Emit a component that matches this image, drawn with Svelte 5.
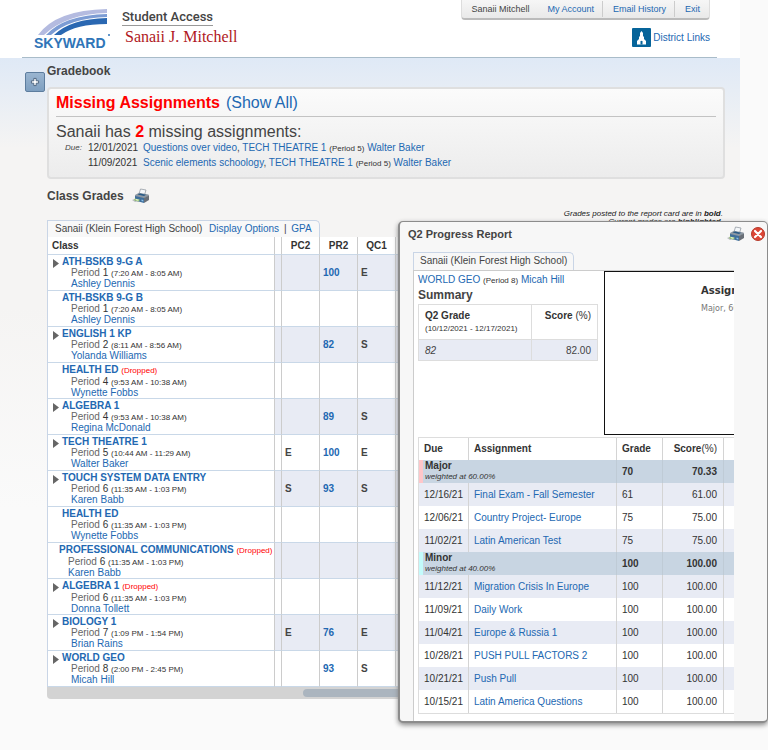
<script lang="ts">
	type Course = {
		name: string;
		period: number;
		time: string;
		teacher: string;
		open?: boolean;
		dropped?: boolean;
		wide?: boolean;
		grades: string[];
	};

	const missing = [
		{ date: '12/01/2021', title: 'Questions over video' },
		{ date: '11/09/2021', title: 'Scenic elements schoology' }
	];

	// grades: PC2, PR2, QC1, Q2
	const courses: Course[] = [
		{ name: 'ATH-BSKB 9-G A', period: 1, time: '7:20 AM - 8:05 AM', teacher: 'Ashley Dennis', open: true, grades: ['', '100', 'E', '100'] },
		{ name: 'ATH-BSKB 9-G B', period: 1, time: '7:20 AM - 8:05 AM', teacher: 'Ashley Dennis', grades: ['', '', '', ''] },
		{ name: 'ENGLISH 1 KP', period: 2, time: '8:11 AM - 8:56 AM', teacher: 'Yolanda Williams', open: true, grades: ['', '82', 'S', '82'] },
		{ name: 'HEALTH ED', period: 4, time: '9:53 AM - 10:38 AM', teacher: 'Wynette Fobbs', dropped: true, grades: ['', '', '', ''] },
		{ name: 'ALGEBRA 1', period: 4, time: '9:53 AM - 10:38 AM', teacher: 'Regina McDonald', open: true, grades: ['', '89', 'S', '89'] },
		{ name: 'TECH THEATRE 1', period: 5, time: '10:44 AM - 11:29 AM', teacher: 'Walter Baker', open: true, grades: ['E', '100', 'E', '100'] },
		{ name: 'TOUCH SYSTEM DATA ENTRY', period: 6, time: '11:35 AM - 1:03 PM', teacher: 'Karen Babb', open: true, grades: ['S', '93', 'S', '93'] },
		{ name: 'HEALTH ED', period: 6, time: '11:35 AM - 1:03 PM', teacher: 'Wynette Fobbs', grades: ['', '', '', ''] },
		{ name: 'PROFESSIONAL COMMUNICATIONS', period: 6, time: '11:35 AM - 1:03 PM', teacher: 'Karen Babb', dropped: true, wide: true, grades: ['', '', '', ''] },
		{ name: 'ALGEBRA 1', period: 6, time: '11:35 AM - 1:03 PM', teacher: 'Donna Tollett', open: true, dropped: true, grades: ['', '', '', ''] },
		{ name: 'BIOLOGY 1', period: 7, time: '1:09 PM - 1:54 PM', teacher: 'Brian Rains', open: true, grades: ['E', '76', 'E', '76'] },
		{ name: 'WORLD GEO', period: 8, time: '2:00 PM - 2:45 PM', teacher: 'Micah Hill', open: true, grades: ['', '93', 'S', '93'] }
	];

	const categories = [
		{
			name: 'Major', weight: '60.00%', grade: '70', score: '70.33', mark: 'pink',
			items: [
				['12/16/21', 'Final Exam - Fall Semester', '61', '61.00'],
				['12/06/21', 'Country Project- Europe', '75', '75.00'],
				['11/02/21', 'Latin American Test', '75', '75.00']
			]
		},
		{
			name: 'Minor', weight: '40.00%', grade: '100', score: '100.00', mark: 'cyan',
			items: [
				['11/12/21', 'Migration Crisis In Europe', '100', '100.00'],
				['11/09/21', 'Daily Work', '100', '100.00'],
				['11/04/21', 'Europe & Russia 1', '100', '100.00'],
				['10/28/21', 'PUSH PULL FACTORS 2', '100', '100.00'],
				['10/21/21', 'Push Pull', '100', '100.00'],
				['10/15/21', 'Latin America Questions', '100', '100.00']
			]
		}
	];
</script>

{#snippet printer()}
	<svg class="printer" viewBox="0 0 18 16" aria-hidden="true">
		<path d="M0 12 L5 10 L8 13 L3 14Z" fill="#b9bdc0" />
		<path d="M7 6 L8.5 1 L14 2 L12.5 7Z" fill="#f4f7fa" stroke="#8a9199" stroke-width=".7" />
		<path d="M3 7 L7 4.8 L16.5 6.5 L17 8 L12 10.5 L3 9Z" fill="#8d98a3" />
		<path d="M3 8 L12 10 L12 15 L3 12.5Z" fill="#3f6f9c" />
		<path d="M12 10 L17 7.5 L17 12 L12 15Z" fill="#696f77" />
		<path d="M5.5 6.5 L8 5.5 L14 6.7 L12 8Z" fill="#285a87" />
		<path d="M3 10.5 L8 11.7 L6.5 13.5 L2 12.3Z" fill="#9cc66b" />
		<path d="M4 11 L7 11.7 L6 12.7 L3.5 12Z" fill="#e8f2da" />
		<path d="M9.5 11.5 L11.3 12 V13.5 L9.5 13Z" fill="#8fc1e8" />
	</svg>
{/snippet}

<div class="page">
	<header class="top">
		<svg class="logo" viewBox="0 0 78 42" role="img" aria-label="Skyward">
			<path d="M4 26 Q22 1 73 0 V4 Q32 5 10 26Z" fill="#b4bbe0" />
			<path d="M12 26 Q30 6 73 5 V8 Q36 9 17 26Z" fill="#7c9cd4" />
			<path d="M20 26 Q36 10 73 9 V15 Q42 15 27 26Z" fill="#2a68b2" />
			<text class="logo-text" x="0" y="39">SKYWARD</text>
			<circle cx="75" cy="26" r="1" fill="#2f75b8" />
		</svg>

		<div class="student">
			<div class="access">Student Access</div>
			<div class="student-name">Sanaii J. Mitchell</div>
		</div>

		<div class="top-right">
			<nav class="account">
				<span>Sanaii Mitchell</span>
				<a href="#account">My Account</a>
				<a href="#email" class="divided">Email History</a>
				<a href="#exit" class="divided">Exit</a>
			</nav>
			<a class="district" href="#district">
				<svg viewBox="0 0 19 19" aria-hidden="true">
					<rect width="19" height="19" rx="1" fill="#06649a" />
					<path d="M9.5 3 L11 5 V8 L12 9 V11 L14 13 V16.5 H5 V13 L7 11 V9 L8 8 V5Z" fill="#fff" />
					<path d="M8.5 16.5 V13.5 Q9.5 12 10.5 13.5 V16.5Z" fill="#06649a" />
				</svg>
				District Links
			</a>
		</div>
	</header>

	<main>
		<button class="plus" aria-label="Expand menu">
			<svg viewBox="0 0 10 10" aria-hidden="true">
				<path d="M4 2 H6 V4 H8 V6 H6 V8 H4 V6 H2 V4 H4Z" fill="#fff" stroke="#4d6580" stroke-width=".8" />
			</svg>
		</button>

		<div class="content">
			<h1>Gradebook</h1>

			<section class="missing">
				<h2>
					<b>Missing Assignments</b>
					<a href="#all">(Show All)</a>
				</h2>
				<p class="count">Sanaii has <b>2</b> missing assignments:</p>
				{#each missing as m, i (m.date)}
					<div class="due">
						<em>{i === 0 ? 'Due:' : ''}</em>
						<span class="date">{m.date}</span>
						<span>
							<a href="#assignment">{m.title}</a>,
							<a href="#course">TECH THEATRE 1</a>
							<small>(Period 5)</small>
							<a href="#teacher">Walter Baker</a>
						</span>
					</div>
				{/each}
			</section>

			<div class="grades-head">
				<h1>Class Grades</h1>
				<button class="icon-btn" aria-label="Print">{@render printer()}</button>
			</div>

			<p class="note">
				Grades posted to the report card are in <b>bold</b>.<br />
				Current grades are <b>highlighted</b>.
			</p>

			<div class="tab">
				Sanaii (Klein Forest High School)
				<a href="#display">Display Options</a>
				<span>|</span>
				<a href="#gpa">GPA</a>
			</div>

			<table class="grades">
				<colgroup>
					<col class="c-class" />
					<col class="c-gap" />
					<col class="c-term" />
					<col class="c-term" />
					<col class="c-term" />
					<col />
				</colgroup>
				<thead>
					<tr>
						<th class="left">Class</th>
						<th></th>
						<th>PC2</th>
						<th>PR2</th>
						<th>QC1</th>
						<th></th>
					</tr>
				</thead>
				<tbody>
					{#each courses as c, i (i)}
						<tr>
							<td class="class-cell">
								<div class="class-row {c.wide ? 'wide' : ''}">
									{#if c.open}
										<button class="arrow" aria-label="Expand {c.name}">
											<svg viewBox="0 0 6 9" aria-hidden="true"><path d="M0 0 L6 4.5 L0 9Z" fill="#666" /></svg>
										</button>
									{/if}
									<div class="class-info">
										<div class="class-name">
											<a href="#class">{c.name}</a>
											{#if c.dropped}<span class="dropped">(Dropped)</span>{/if}
										</div>
										<div class="period">Period <i>{c.period}</i> <small>({c.time})</small></div>
										<div class="teacher"><a href="#teacher">{c.teacher}</a></div>
									</div>
								</div>
							</td>
							<td></td>
							{#each c.grades as g, k (k)}
								<td class="grade">
									{#if k % 2 === 1 && g}<a href="#grade">{g}</a>{:else}{g}{/if}
								</td>
							{/each}
						</tr>
					{/each}
				</tbody>
			</table>
			<div class="scrollbar"><div class="thumb"></div></div>
		</div>
	</main>

	<div class="dialog" role="dialog" aria-label="Q2 Progress Report">
		<div class="dialog-head">
			<h2>Q2 Progress Report</h2>
			<button class="icon-btn" aria-label="Print report">{@render printer()}</button>
			<button class="icon-btn" aria-label="Close">
				<svg class="close" viewBox="0 0 14 14" aria-hidden="true">
					<circle cx="7" cy="7" r="6.5" fill="#dc4636" stroke="#b53a2c" />
					<path d="M4 4 L10 10 M10 4 L4 10" stroke="#fff" stroke-width="2.2" stroke-linecap="round" />
				</svg>
			</button>
		</div>

		<div class="dialog-tab">Sanaii (Klein Forest High School)</div>

		<div class="dialog-body">
			<div class="overview">
				<div class="summary">
					<div class="course">
						<a href="#course">WORLD GEO</a>
						<small>(Period 8)</small>
						<a href="#teacher">Micah Hill</a>
					</div>
					<h3>Summary</h3>
					<table class="summary-table">
						<thead>
							<tr>
								<th class="left">Q2 Grade<br /><small>(10/12/2021 - 12/17/2021)</small></th>
								<th>Score <span>(%)</span></th>
							</tr>
						</thead>
						<tbody>
							<tr>
								<td class="left"><em>82</em></td>
								<td>82.00</td>
							</tr>
						</tbody>
					</table>
				</div>
				<div class="chart">
					<div class="chart-title">Assignments</div>
					<div class="chart-sub">Major, 60.00%</div>
				</div>
			</div>

			<table class="work">
				<colgroup>
					<col class="w-due" />
					<col class="w-name" />
					<col class="w-grade" />
					<col class="w-score" />
					<col />
				</colgroup>
				<thead>
					<tr>
						<th>Due</th>
						<th>Assignment</th>
						<th>Grade</th>
						<th class="score">Score<span>(%)</span></th>
						<th></th>
					</tr>
				</thead>
				{#each categories as cat (cat.name)}
					<tbody>
						<tr class="cat">
							<td colspan="2" class="cat-name {cat.mark}">
								<b>{cat.name}</b>
								<em>weighted at {cat.weight}</em>
							</td>
							<td><b>{cat.grade}</b></td>
							<td class="score"><b>{cat.score}</b></td>
							<td></td>
						</tr>
						{#each cat.items as [due, title, grade, score] (title)}
							<tr>
								<td>{due}</td>
								<td class="title"><a href="#work">{title}</a></td>
								<td>{grade}</td>
								<td class="score">{score}</td>
								<td></td>
							</tr>
						{/each}
					</tbody>
				{/each}
			</table>
		</div>
	</div>
</div>

<style>
	:global(body) {
		background: #fafafa;
	}

	.page {
		position: relative;
		min-height: 100vh;
		box-sizing: border-box;
		padding-right: 28px;
		font-family: 'Liberation Sans', Arial, sans-serif;
		font-size: 10px;
		color: #444;
		overflow: hidden;
	}

	.page *,
	.page *::before {
		box-sizing: border-box;
	}

	a {
		color: #2268b2;
		text-decoration: none;
	}

	h1,
	h2,
	h3,
	p {
		margin: 0;
	}

	button {
		padding: 0;
		border: 0;
		background: none;
		cursor: pointer;
	}

	svg {
		display: block;
	}

	small {
		font-size: 8px;
		color: #333;
	}

	.top {
		display: flex;
		height: 58px;
		padding: 0 23px 0 34px;
		background:
			linear-gradient(#a9bcc9, #a9bcc9) 22px 100% / calc(100% - 45px) 1px no-repeat,
			#fff;
	}

	.logo {
		width: 78px;
		height: 42px;
		margin-top: 9px;
	}

	.logo-text {
		font-family: 'Liberation Sans', Arial, sans-serif;
		font-size: 14px;
		font-weight: 700;
		fill: #2f75b8;
	}

	.student {
		margin: 9px 0 0 10px;
	}

	.access {
		width: max-content;
		border-bottom: 1px solid #999;
		font-family: Roboto, 'Liberation Sans', sans-serif;
		font-size: 13px;
		font-weight: 500;
		line-height: 16px;
	}

	.student-name {
		padding-left: 3px;
		font-family: 'Liberation Serif', serif;
		font-size: 16px;
		line-height: 22px;
		color: #b01722;
	}

	.top-right {
		display: flex;
		flex-direction: column;
		align-items: flex-end;
		margin-left: auto;
		padding-right: 7px;
	}

	.account {
		display: flex;
		align-items: center;
		height: 20px;
		padding: 0 9px;
		border: 1px solid #ddd;
		border-width: 0 1px 2px;
		border-color: #ddd #ddd #bbb;
		border-radius: 0 0 4px 4px;
		background: linear-gradient(#f6f6f6, #e9e9e9);
		font-size: 9px;
		line-height: 16px;
	}

	.account a {
		margin-left: 18px;
	}

	.account .divided {
		margin-left: 8px;
		padding-left: 10px;
		border-left: 1px solid #ccc;
	}

	.district {
		display: flex;
		align-items: center;
		gap: 2px;
		margin-top: 8px;
	}

	.district svg {
		width: 19px;
		height: 19px;
	}

	main {
		display: grid;
		grid-template-columns: 47px 1fr;
		align-items: start;
		min-height: calc(100vh - 58px);
		padding-right: 15px;
		background: linear-gradient(#dfe9f6, #f5f4f3 90px, #f5f4f3 250px, #fafafa 450px);
	}

	.plus {
		display: grid;
		place-items: center;
		width: 20px;
		height: 20px;
		margin: 14px 0 0 25px;
		border: 1px solid #5d7d9e;
		border-radius: 2px;
		background: linear-gradient(#9ab5d0, #7e9fc0);
	}

	.plus svg {
		width: 12px;
		height: 12px;
	}

	.content {
		display: flex;
		flex-direction: column;
		min-width: 0;
	}

	h1 {
		font-size: 12px;
		line-height: 16px;
	}

	.content > h1 {
		margin-top: 5px;
	}

	.missing {
		height: 92px;
		margin-top: 8px;
		padding: 5px 7px;
		border: 2px solid #dfdfdf;
		border-radius: 4px;
		background: linear-gradient(#fbfbfb, #ececec);
	}

	.missing h2 {
		display: flex;
		gap: 6px;
		height: 23px;
		border-bottom: 1px solid #c3c3c3;
		font-size: 16px;
		font-weight: 400;
		line-height: 18px;
	}

	.missing h2 b,
	.count b {
		color: #f00;
	}

	.count {
		margin-top: 6px;
		font-size: 16px;
		line-height: 18px;
	}

	.due {
		display: grid;
		grid-template-columns: 20px 52px 1fr;
		column-gap: 3px;
		padding-left: 9px;
		line-height: 14px;
	}

	.due em {
		font-size: 8px;
	}

	.due > .date {
		color: #333;
	}

	.grades-head {
		display: flex;
		align-items: center;
		gap: 8px;
		margin-top: 9px;
	}

	.printer {
		width: 18px;
		height: 16px;
	}

	.note {
		align-self: flex-end;
		margin: 6px 2px 0 0;
		font-size: 8px;
		font-style: italic;
		line-height: 8px;
		text-align: right;
		color: #222;
	}

	.tab {
		align-self: flex-start;
		height: 17px;
		margin-top: -6px;
		padding: 0 7px;
		border: 1px solid #c9d5e6;
		border-bottom: 0;
		border-radius: 0 5px 0 0;
		line-height: 15px;
		background: #f8f8f8;
	}

	.tab a:first-of-type {
		margin-left: 4px;
	}

	.tab span {
		margin: 0 2px;
	}

	table {
		border-spacing: 0;
		table-layout: fixed;
		background: #fff;
	}

	th,
	td {
		padding: 0;
	}

	.grades {
		width: 100%;
		border-left: 1px solid #c9d5e6;
	}

	.c-class { width: 227px; }
	.c-gap { width: 7px; }
	.c-term { width: 38px; }

	.grades th,
	.grades td {
		border-right: 1px solid #ccc;
		border-bottom: 1px solid #c9d8e8;
	}

	.grades th {
		height: 18px;
		line-height: 15px;
		color: #333;
	}

	.grades th.left {
		padding-left: 4px;
		text-align: left;
	}

	.grades td {
		height: 36px;
		background: #fff;
	}

	.grades tbody tr:nth-child(odd) td:not(.class-cell) {
		background: #e8ebf4;
	}

	.class-row {
		display: grid;
		grid-template-columns: 14px 1fr;
		height: 35px;
	}

	.class-row.wide {
		grid-template-columns: 11px 1fr;
	}

	.class-info {
		grid-column: 2;
		white-space: nowrap;
	}

	.arrow {
		width: 6px;
		height: 9px;
		margin: 4px 0 0 5px;
	}

	.class-name {
		font-weight: 700;
		line-height: 13px;
	}

	.dropped {
		font-size: 8px;
		font-weight: 400;
		color: #f00;
	}

	.period,
	.teacher {
		padding-left: 9px;
		line-height: 10px;
	}

	.period {
		color: #666;
	}

	.period i {
		font-style: normal;
		color: #333;
	}

	.grades td.grade {
		padding-left: 3px;
		font-weight: 700;
	}

	.scrollbar {
		height: 12px;
		padding: 2px 0 2px 256px;
		border-radius: 0 0 4px 4px;
		background: #d3d3d3;
	}

	.thumb {
		height: 8px;
		border-radius: 4px;
		background: #abb5bf;
	}

	.dialog {
		position: absolute;
		top: 221px;
		left: 398px;
		right: 0;
		padding: 0 33px 0 13px;
		border: 2px solid #8c8c8c;
		border-width: 1px 1px 2px 2px;
		border-radius: 5px;
		background: #f7f7f7;
		box-shadow: 0 2px 5px #888;
		overflow: hidden;
	}

	.dialog-head {
		display: flex;
		align-items: center;
		gap: 6px;
		height: 24px;
		margin: 0 -31px 0 -5px;
	}

	.dialog-head h2 {
		flex: 1;
		font-size: 11px;
	}

	.close {
		width: 14px;
		height: 14px;
	}

	.dialog-tab {
		width: max-content;
		height: 18px;
		margin-top: 6px;
		padding: 0 6px;
		border: 1px solid #c9d5e6;
		border-bottom: 0;
		border-radius: 0 5px 0 0;
		line-height: 16px;
	}

	.dialog-body {
		padding: 0 0 7px 4px;
		border-top: 1px solid #ccc;
		border-left: 1px solid #ccc;
		background: #fff;
		overflow: hidden;
	}

	.overview {
		display: flex;
		height: 164px;
	}

	.summary {
		flex: 0 0 186px;
	}

	.course {
		line-height: 17px;
	}

	.summary h3 {
		font-size: 12px;
		line-height: 13px;
	}

	.summary-table {
		width: 180px;
		margin-top: 2px;
		border: 1px solid #ddd;
	}

	.summary-table th {
		height: 34px;
		padding: 5px 6px 0 0;
		line-height: 12px;
		text-align: right;
		vertical-align: top;
		color: #333;
	}

	.summary-table th small,
	.summary-table th span,
	.work th span {
		font-weight: 400;
	}

	.summary-table td {
		height: 21px;
		padding-right: 6px;
		border-top: 1px solid #ddd;
		text-align: right;
		background: #e8ebf4;
	}

	.summary-table .left {
		width: 113px;
		padding-left: 6px;
		padding-right: 0;
		border-right: 1px solid #ddd;
		text-align: left;
	}

	.chart {
		flex: 0 0 300px;
		padding: 12px 0 0 96px;
		border: 1px solid #111;
		font-family: 'DejaVu Sans', sans-serif;
		line-height: 14px;
	}

	.chart-title {
		font-weight: 700;
		color: #333;
	}

	.chart-sub {
		margin-top: 4px;
		font-size: 8px;
		color: #777;
	}

	.work {
		width: 100%;
		margin-top: 2px;
		border-top: 1px solid #ddd;
		border-bottom: 1px solid #ddd;
		border-left: 1px solid #ddd;
	}

	.w-due { width: 50px; }
	.w-name { width: 148px; }
	.w-grade { width: 46px; }
	.w-score { width: 61px; }

	.work th,
	.work td {
		height: 23px;
		padding-left: 5px;
		border-right: 1px solid #d4d4d4;
		text-align: left;
		line-height: 12px;
		white-space: nowrap;
		color: #333;
	}

	.work th {
		height: 22px;
	}

	.work th:last-child,
	.work td:last-child {
		border-right: 0;
	}

	.work td:first-child {
		text-align: center;
		padding: 0;
	}

	.work .score {
		padding: 0 6px 0 0;
		text-align: right;
	}

	.work tr:nth-child(even) td {
		background: #e8ebf4;
	}

	.work .cat td {
		border-right-color: #bfcbd6;
		background: #c8d5e2;
	}

	.work .cat td.cat-name {
		padding-left: 2px;
		border-left: 4px solid;
		text-align: left;
		vertical-align: top;
	}

	.cat-name b,
	.cat-name em {
		display: block;
		line-height: 11px;
	}

	.cat-name em {
		font-size: 8px;
	}

	.work .cat td.pink { border-left-color: #ffc6c9; }
	.work .cat td.cyan { border-left-color: #c3fbfb; }
</style>
